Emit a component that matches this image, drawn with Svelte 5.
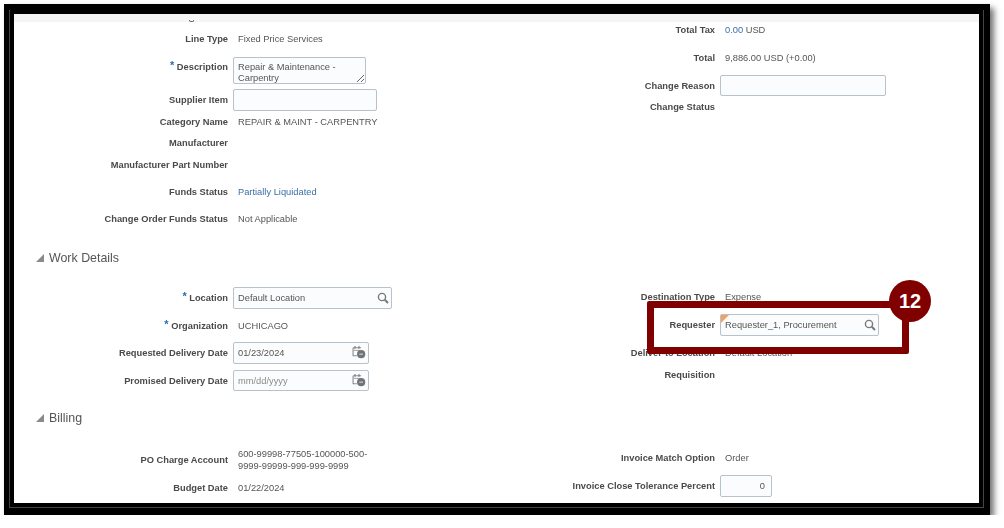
<script>
  const leftTop = [
    { label: "Line Type", value: "Fixed Price Services", h: 34 },
    { label: "Description", star: true, kind: "area", text: "Repair & Maintenance - Carpentry", h: 33 },
    { label: "Supplier Item", kind: "input", w: 144, h: 22, after: 1 },
    { label: "Category Name", value: "REPAIR & MAINT - CARPENTRY", h: 20 },
    { label: "Manufacturer", h: 22 },
    { label: "Manufacturer Part Number", h: 21 },
    { label: "Funds Status", value: "Partially Liquidated", link: true, h: 34 },
    { label: "Change Order Funds Status", value: "Not Applicable", h: 20 },
  ];

  const work = [
    { label: "Location", star: true, kind: "input", text: "Default Location", w: 159, icon: "search", h: 22 },
    { label: "Organization", star: true, value: "UCHICAGO", h: 33 },
    { label: "Requested Delivery Date", kind: "input", text: "01/23/2024", w: 136, icon: "date", h: 22 },
    { label: "Promised Delivery Date", kind: "input", hint: "mm/dd/yyyy", w: 136, icon: "date", h: 21, gap: 6 },
  ];

  const billing = [
    { label: "PO Charge Account", value: "600-99998-77505-100000-500-9999-99999-999-999-9999", wrap: true, h: 28 },
    { label: "Budget Date", value: "01/22/2024", h: 28 },
  ];

  const right = [
    { label: "Total Tax", value: "0.00", suffix: " USD", link: true, h: 16 },
    { label: "Total", value: "9,886.00 USD (+0.00)", h: 22, gap: 9 },
    { label: "Change Reason", kind: "input", w: 166, h: 21, gap: 6 },
    { label: "Change Status", h: 21 },
    { label: "Destination Type", value: "Expense", h: 22, gap: 169 },
    { label: "Requester", kind: "input", text: "Requester_1, Procurement", w: 159, icon: "search", flag: true, h: 22, gap: 6 },
    { label: "Deliver-to Location", value: "Default Location", h: 22, gap: 6 },
    { label: "Requisition", h: 21 },
    { label: "Invoice Match Option", value: "Order", h: 22, gap: 62 },
    { label: "Invoice Close Tolerance Percent", kind: "input", text: "0", num: true, w: 52, h: 22, gap: 6 },
  ];
</script>

{#snippet row(r)}
  <div class="row" style="height: {r.h}px; margin-top: {r.gap ?? 0}px; margin-bottom: {r.after ?? 0}px">
    <div class="label">
      {#if r.star}<span class="star">*</span>{/if}
      {r.label}
    </div>
    {#if r.kind === "area"}
      <textarea class="box area" readonly>{r.text}</textarea>
    {:else if r.kind === "input"}
      <div class="field" style="width: {r.w}px; height: {r.h}px">
        <input class="box" class:num={r.num} readonly value={r.text ?? ""} placeholder={r.hint ?? ""} />
        {#if r.flag}<span class="flag"></span>{/if}
        {#if r.icon === "search"}
          <svg class="icon" width="12" height="12" viewBox="0 0 12 12" fill="none" stroke="#7a7a7a">
            <circle cx="5" cy="5" r="3.6" stroke-width="1.4" />
            <path d="M7.8 7.8 11 11" stroke-width="2" />
          </svg>
        {:else if r.icon === "date"}
          <svg class="icon date" width="14" height="14" viewBox="0 0 13 13" fill="none">
            <path d="M1 2.5h7.5M1 2.5v7.5h3.5" stroke="#8a8a8a" />
            <path d="M2.8 1v2.5M6.5 1v2.5" stroke="#777" />
            <path d="M1 5h7" stroke="#aaa" />
            <circle cx="8.5" cy="8.5" r="3.8" fill="#6f7478" />
            <path d="M6.8 8.5h3.4" stroke="#d5d5d5" />
          </svg>
        {/if}
      </div>
    {:else if r.value}
      <div class="value" class:wrap={r.wrap}>
        <span class:link={r.link}>{r.value}</span>{r.suffix ?? ""}
      </div>
    {/if}
  </div>
{/snippet}

<div class="frame">
  <div class="page">
    <div class="band"><span class="cut"></span></div>
    <div class="columns">
      <div class="left">
        {#each leftTop as r}{@render row(r)}{/each}
        <h2 class="section work"><i></i>Work Details</h2>
        {#each work as r}{@render row(r)}{/each}
        <h2 class="section billing"><i></i>Billing</h2>
        {#each billing as r}{@render row(r)}{/each}
      </div>
      <div class="right">
        {#each right as r}{@render row(r)}{/each}
      </div>
    </div>
  </div>
  <div class="callout"></div>
  <div class="badge">12</div>
</div>

<style>
  :global(body) {
    background: #fff;
    overflow: hidden;
  }

  .frame {
    position: relative;
    box-sizing: border-box;
    width: 986px;
    height: 511px;
    margin: 4px 0 0 4px;
    padding: 10px 11px 12px 10px;
    background: #000;
    box-shadow: 4px 4px 6px rgba(0, 0, 0, 0.55);
    font-family: "Liberation Sans", Arial, sans-serif;
    filter: blur(0.45px);
  }

  .page {
    height: 100%;
    overflow: hidden;
    background: #fff;
    box-shadow:
      0 0 0 4px #000,
      -5px -4px 0 0 #444,
      5px -4px 0 0 #444,
      -5px 5px 0 0 #444,
      5px 5px 0 0 #444;
  }

  .band {
    position: relative;
    height: 8px;
    background: #f5f5f5;
  }

  .cut {
    position: absolute;
    left: 175px;
    bottom: 0;
    width: 5px;
    height: 2px;
    border: 1px solid #666;
    border-top: 0;
    border-radius: 0 0 3px 3px;
    box-sizing: border-box;
  }

  .columns {
    display: flex;
  }

  .left {
    width: 476px;
    --label: 214px;
  }

  .right {
    --label: 225px;
  }

  .row {
    display: flex;
    align-items: center;
    gap: 5px;
    font-size: 9.3px;
    color: #555;
  }

  .label {
    flex: none;
    width: var(--label);
    text-align: right;
    font-weight: 700;
    color: #4a4a4a;
    white-space: nowrap;
  }

  .star {
    color: #2a6cb0;
    font-size: 11px;
    line-height: 0;
    vertical-align: 1px;
  }

  .value {
    padding-left: 5px;
    white-space: nowrap;
  }

  .value.wrap {
    width: 135px;
    white-space: normal;
    line-height: 12px;
  }

  .link {
    color: #3a6ea5;
  }

  .field {
    position: relative;
    flex: none;
  }

  .box {
    display: block;
    box-sizing: border-box;
    width: 100%;
    height: 100%;
    margin: 0;
    padding: 0 4px;
    border: 1px solid #b7c2ca;
    border-radius: 2px;
    background: #fbfcfd;
    font: inherit;
    color: #555;
    outline: none;
  }

  .box::placeholder {
    color: #8a8a8a;
    opacity: 1;
  }

  .box.num {
    text-align: right;
    padding-right: 6px;
  }

  .area {
    flex: none;
    align-self: flex-start;
    width: 133px;
    height: 27px;
    margin-top: 1px;
    padding: 4px 4px 0;
    line-height: 11px;
    overflow: hidden;
    resize: both;
  }

  .row:has(.area) {
    align-items: flex-start;
  }

  .row:has(.area) .label {
    line-height: 22px;
  }

  .icon {
    position: absolute;
    top: 50%;
    right: 3px;
    transform: translateY(-50%);
  }

  .icon.date {
    right: 3px;
    top: 10px;
  }

  .flag {
    position: absolute;
    top: 1px;
    left: 1px;
    width: 8px;
    height: 8px;
    background: #f4a060;
    clip-path: polygon(0 0, 100% 0, 0 100%);
  }

  .section {
    display: flex;
    align-items: center;
    height: 22px;
    margin: 0;
    padding-left: 22px;
    font-size: 12.4px;
    font-weight: 400;
    color: #555;
  }

  .section i {
    width: 8px;
    height: 8px;
    margin-right: 5px;
    background: #8a8a8a;
    clip-path: polygon(100% 0, 100% 100%, 0 100%);
  }

  .section.work {
    margin: 18px 0;
  }

  .section.billing {
    margin: 16px 0 17px;
  }

  .callout {
    position: absolute;
    left: 643px;
    top: 297px;
    box-sizing: border-box;
    width: 262px;
    height: 53px;
    border: 7px solid #800000;
    border-radius: 2px;
  }

  .badge {
    position: absolute;
    left: 885px;
    top: 276px;
    width: 42px;
    height: 42px;
    border-radius: 50%;
    background: #800000;
    color: #fff;
    font-size: 20px;
    font-weight: 700;
    line-height: 42px;
    text-align: center;
  }
</style>
